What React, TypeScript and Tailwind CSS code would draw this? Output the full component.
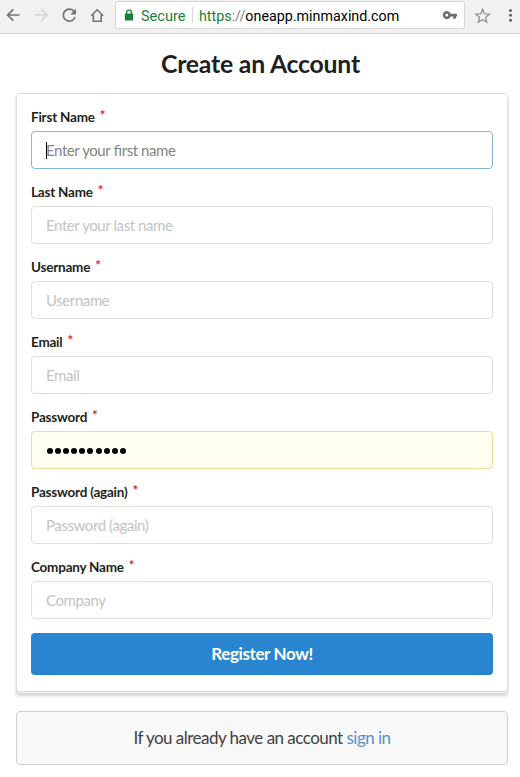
import React from "react";

type Field = {
  label: string;
  placeholder: string;
  state?: "focus" | "autofill";
};

const fields: Field[] = [
  { label: "First Name", placeholder: "Enter your first name", state: "focus" },
  { label: "Last Name", placeholder: "Enter your last name" },
  { label: "Username", placeholder: "Username" },
  { label: "Email", placeholder: "Email" },
  { label: "Password", placeholder: "", state: "autofill" },
  { label: "Password (again)", placeholder: "Password (again)" },
  { label: "Company Name", placeholder: "Company" },
];

function BrowserBar() {
  return (
    <header className="flex h-[34px] items-start border-b border-[#d5d5d5] bg-[#f1f1f1] font-['Roboto',sans-serif]">
      <svg className="block h-[31px] w-[115px] shrink-0" viewBox="0 0 115 31" fill="none" stroke="#70747a" strokeWidth="1.7">
        <path d="M19.5 15H8M13.3 9.3L7.6 15l5.7 5.7" />
        <path d="M35 15h11.5M41.2 9.3l5.7 5.7-5.7 5.7" stroke="#d3d5d6" />
        <path d="M74.1 11.5A6 6 0 1 0 75 17" />
        <path d="M76 8.8v5.6h-5.6z" fill="#70747a" stroke="none" />
        <path d="M91.2 15.8L97.2 9.8l6 6M93.3 14.8v6.4h7.9v-6.4" strokeWidth="1.6" />
      </svg>
      <div className="mt-px flex h-[28px] w-[350px] shrink-0 items-center rounded-[3px] border border-[#d5d5d5] bg-white text-[14.3px] text-black">
        <svg className="ml-[8px] block h-[12px] w-[10px] shrink-0" viewBox="0 0 10 12">
          <path d="M2.6 5V3.5a2.4 2.4 0 0 1 4.8 0V5" fill="none" stroke="#188038" strokeWidth="1.3" />
          <rect x="0.8" y="4.5" width="8.4" height="7" rx="0.8" fill="#188038" />
        </svg>
        <span className="ml-[7px] w-[51px] pt-[3px] whitespace-nowrap text-[14.5px] text-[#188038]">Secure</span>
        <span className="h-[16px] w-px bg-[#d7d7d7]" />
        <span className="ml-[6px] pt-[3px] whitespace-nowrap">
          <span className="text-[#188038]">https</span>
          <span className="text-[#808080]">://</span>oneapp.minmaxind.com
        </span>
        <svg className="mr-[6px] ml-auto block h-[10px] w-[16px] shrink-0" viewBox="0 0 16 10">
          <path fill="#6b6f76" fillRule="evenodd" d="M8.7 3.7H15v2.7h-1.1v2.3h-2.6V6.4H8.7a4.1 4.1 0 1 1 0-2.7zM4.8 3.5a1.5 1.5 0 1 0 0 3a1.5 1.5 0 0 0 0-3z" />
        </svg>
      </div>
      <svg className="block h-[31px] w-[55px] shrink-0" viewBox="0 0 55 31">
        <path d="M17.6 9.2l1.8 4.6 5 .4-3.8 3.2 1.2 4.9-4.2-2.7-4.2 2.7 1.2-4.9-3.8-3.2 5-.4z" fill="none" stroke="#85888c" strokeWidth="1.2" />
        <g fill="#5f6368">
          <circle cx="45.5" cy="10.5" r="1.5" />
          <circle cx="45.5" cy="15.3" r="1.5" />
          <circle cx="45.5" cy="20.2" r="1.5" />
        </g>
      </svg>
    </header>
  );
}

function FormField({ label, placeholder, state }: Field) {
  const box =
    state === "focus"
      ? "border-[#85b7d9] bg-white text-[#858585]"
      : state === "autofill"
        ? "border-[#e5dfa1] bg-[#fffff0] pt-[2px] text-black"
        : "border-[#dedfdf] bg-white text-[#c3c3c3]";
  return (
    <div className="mb-[14px]">
      <div className="flex h-[23px] items-start text-[13.5px] leading-[18px] font-bold tracking-[-0.22px] text-[#1e1f20]">
        <span>{label}</span>
        <span className="-mt-[2px] ml-[5px] text-[#db2828]">*</span>
      </div>
      <div className={"flex h-[38px] items-center rounded-[4px] border pl-[14px] text-[15px] leading-[18px] tracking-[-0.41px] [font-feature-settings:'liga'] " + box}>
        {state === "focus" && <span className="-mr-px h-[17px] w-px bg-black" />}
        {state === "autofill" ? (
          <span className="ml-[1px] flex gap-[2px]">
            {Array.from({ length: 10 }, (_, i) => (
              <span key={i} className="mr-[0.1px] size-[6px] rounded-full bg-black" />
            ))}
          </span>
        ) : (
          <span>{placeholder}</span>
        )}
      </div>
    </div>
  );
}

export default function App() {
  return (
    <div className="h-[777px] w-[520px] overflow-hidden bg-white font-['Lato',sans-serif]">
      <BrowserBar />
      <main className="px-[16px]">
        <h1 className="pt-[14px] pb-px pl-[1px] text-center text-[24.8px] leading-[31px] font-bold tracking-[-0.22px] text-[#1e1f20]">Create an Account</h1>
        <section className="mt-[13px] h-[601px] w-[492px] rounded-[4px] border border-[#dcddde] bg-[#f6f6f6] shadow-[0_2px_3px_rgba(34,36,38,0.2)]">
          <div className="h-[598px] rounded-[3px] border-b border-[#d5d6d6] bg-white px-[14px] pt-[14px]">
            {fields.map((field) => (
              <FormField key={field.label} {...field} />
            ))}
            <button className="block h-[42px] w-full rounded-[4px] bg-[#2985d0] pb-[2px] text-[17px] leading-[17px] font-bold tracking-[-0.38px] text-white">Register Now!</button>
          </div>
        </section>
        <section className="mt-[17px] flex h-[54px] w-[492px] items-center justify-center rounded-[4px] border border-[#cfcfd0] bg-[#f8f8f8] text-[17px] tracking-[-0.52px] text-[#404040]">
          <p>
            If you already have an account <a className="text-[#568fcb]">sign in</a>
          </p>
        </section>
      </main>
    </div>
  );
}
